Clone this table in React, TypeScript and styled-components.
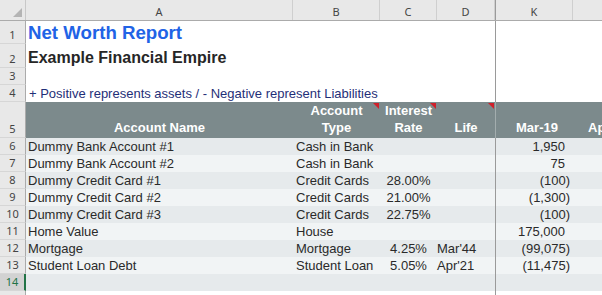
import styled, { createGlobalStyle, css } from "styled-components";

const GlobalStyle = createGlobalStyle`
  html, body {
    margin: 0;
    padding: 0;
    background: #fff;
    overflow: hidden;
  }
  #root {
    width: 602px;
    height: 295px;
    overflow: hidden;
  }
`;

const COLUMNS = "26px 267px 87px 57px 58px 78px 77px";

type Align = "left" | "center" | "right";

const accounts = [
  { name: "Dummy Bank Account #1", type: "Cash in Bank", rate: "", life: "", value: "1,950", neg: false },
  { name: "Dummy Bank Account #2", type: "Cash in Bank", rate: "", life: "", value: "75", neg: false },
  { name: "Dummy Credit Card #1", type: "Credit Cards", rate: "28.00%", life: "", value: "(100)", neg: true },
  { name: "Dummy Credit Card #2", type: "Credit Cards", rate: "21.00%", life: "", value: "(1,300)", neg: true },
  { name: "Dummy Credit Card #3", type: "Credit Cards", rate: "22.75%", life: "", value: "(100)", neg: true },
  { name: "Home Value", type: "House", rate: "", life: "", value: "175,000", neg: false },
  { name: "Mortgage", type: "Mortgage", rate: "4.25%", life: "Mar'44", value: "(99,075)", neg: true },
  { name: "Student Loan Debt", type: "Student Loan", rate: "5.05%", life: "Apr'21", value: "(11,475)", neg: true },
];

export default function App() {
  return (
    <>
      <GlobalStyle />
      <Sheet>
        <HeaderBar>
          <Corner>
            <CornerMark />
          </Corner>
          <ColHead>A</ColHead>
          <ColHead>B</ColHead>
          <ColHead>C</ColHead>
          <ColHead>D</ColHead>
          <ColHead $freeze>K</ColHead>
          <ColHead />
        </HeaderBar>

        <Row $h={23}>
          <RowHead>1</RowHead>
          <Cell>
            <Title>Net Worth Report</Title>
          </Cell>
          <Cell />
          <Cell />
          <Cell />
          <Cell $freeze="#9a9a9a" />
          <Cell />
        </Row>

        <Row $h={24}>
          <RowHead>2</RowHead>
          <Cell $pb={1}>
            <Subtitle>Example Financial Empire</Subtitle>
          </Cell>
          <Cell />
          <Cell />
          <Cell />
          <Cell $freeze="#9a9a9a" />
          <Cell />
        </Row>

        <Row $h={17}>
          <RowHead>3</RowHead>
          <Cell />
          <Cell />
          <Cell />
          <Cell />
          <Cell $freeze="#9a9a9a" />
          <Cell />
        </Row>

        <Row $h={17}>
          <RowHead>4</RowHead>
          <Cell $pl={3}>
            <Note>+ Positive represents assets / - Negative represent Liabilities</Note>
          </Cell>
          <Cell />
          <Cell />
          <Cell />
          <Cell $freeze="#9a9a9a" />
          <Cell />
        </Row>

        <Row $h={36} $bg="#7c8a8c">
          <RowHead>5</RowHead>
          <Cell $align="center" $pb={2}>
            <HeadText>Account Name</HeadText>
          </Cell>
          <Cell $align="center" $pb={2}>
            <HeadText>
              Account
              <br />
              Type
            </HeadText>
            <CommentMark />
          </Cell>
          <Cell $align="center" $pb={2}>
            <HeadText>
              Interest
              <br />
              Rate
            </HeadText>
            <CommentMark />
          </Cell>
          <Cell $align="center" $pb={2}>
            <HeadText>Life</HeadText>
            <CommentMark />
          </Cell>
          <Cell $align="center" $pl={7} $pb={2} $freeze="#a3adae">
            <HeadText>Mar-19</HeadText>
          </Cell>
          <Cell $align="left" $pl={15} $pb={2}>
            <HeadText>Apr-19</HeadText>
          </Cell>
        </Row>

        {accounts.map((a, i) => (
          <Row key={a.name} $h={17} $bg={i % 2 === 0 ? "#e6eaec" : "#f1f4f5"}>
            <RowHead>{i + 6}</RowHead>
            <Cell>
              <Data>{a.name}</Data>
            </Cell>
            <Cell $pl={3}>
              <Data>{a.type}</Data>
            </Cell>
            <Cell $align="center">
              <Data>{a.rate}</Data>
            </Cell>
            <Cell $pl={0}>
              <Data>{a.life}</Data>
            </Cell>
            <Cell $align="right" $pr={a.neg ? 3 : 8} $freeze="#9a9a9a">
              <Data>{a.value}</Data>
            </Cell>
            <Cell />
          </Row>
        ))}

        <Row $h={17} $bg="#e6eaec">
          <RowHead $selected>14</RowHead>
          <Cell />
          <Cell />
          <Cell />
          <Cell />
          <Cell $freeze="#9a9a9a" />
          <Cell />
        </Row>

        <Row $h={17}>
          <RowHead />
          <Cell />
          <Cell />
          <Cell />
          <Cell />
          <Cell $freeze="#9a9a9a" />
          <Cell />
        </Row>
      </Sheet>
    </>
  );
}

const Sheet = styled.div`
  width: 650px;
  font-family: "Liberation Sans", Arial, sans-serif;
`;

const HeaderBar = styled.div`
  display: grid;
  grid-template-columns: ${COLUMNS};
  height: 20px;
  background: #e8e8e8;
  border-bottom: 1px solid #ababab;
`;

const Corner = styled.div`
  display: flex;
  align-items: flex-end;
  justify-content: flex-end;
  padding: 0 3px 3px 0;
  border-right: 1px solid #c8c8c8;
`;

const CornerMark = styled.div`
  width: 0;
  height: 0;
  border-left: 9px solid transparent;
  border-bottom: 9px solid #b4b4b4;
`;

const ColHead = styled.div<{ $freeze?: boolean }>`
  display: flex;
  align-items: center;
  justify-content: center;
  padding-top: 2px;
  border-right: 1px solid #cfcfcf;
  font: 11px "Noto Sans", "DejaVu Sans", sans-serif;
  color: #444;
  ${(p) =>
    p.$freeze &&
    css`
      border-left: 1px solid #9a9a9a;
    `}
`;

const Row = styled.div<{ $h: number; $bg?: string }>`
  display: grid;
  grid-template-columns: ${COLUMNS};
  height: ${(p) => p.$h}px;
  background: ${(p) => p.$bg ?? "#fff"};
`;

const RowHead = styled.div<{ $selected?: boolean }>`
  display: flex;
  align-items: flex-end;
  justify-content: center;
  padding-bottom: 1px;
  line-height: 15px;
  background: ${(p) => (p.$selected ? "#d2d2d2" : "#e8e8e8")};
  border-right: ${(p) => (p.$selected ? "2px solid #217346" : "1px solid #ababab")};
  border-bottom: 1px solid #d6d6d6;
  font: 11px "Noto Sans", "DejaVu Sans", sans-serif;
  color: ${(p) => (p.$selected ? "#217346" : "#444")};
`;

const Cell = styled.div<{
  $align?: Align;
  $pl?: number;
  $pr?: number;
  $pb?: number;
  $freeze?: string;
}>`
  position: relative;
  display: flex;
  align-items: flex-end;
  justify-content: ${(p) =>
    p.$align === "center" ? "center" : p.$align === "right" ? "flex-end" : "flex-start"};
  text-align: ${(p) => p.$align ?? "left"};
  padding: 0 ${(p) => p.$pr ?? 2}px ${(p) => p.$pb ?? 0}px ${(p) => p.$pl ?? 2}px;
  min-width: 0;
  white-space: nowrap;
  ${(p) =>
    p.$freeze &&
    css`
      border-left: 1px solid ${p.$freeze};
    `}
`;

const CommentMark = styled.span`
  position: absolute;
  top: 1px;
  right: 1px;
  width: 0;
  height: 0;
  border-top: 6px solid #d0202a;
  border-left: 6px solid transparent;
`;

const Title = styled.span`
  font-size: 18.67px;
  font-weight: bold;
  line-height: 22px;
  color: #2163e6;
`;

const Subtitle = styled.span`
  font-size: 16px;
  font-weight: bold;
  line-height: 19px;
  color: #262626;
`;

const Note = styled.span`
  font-size: 13px;
  line-height: 16px;
  color: #1f2f78;
`;

const HeadText = styled.span`
  font-size: 13px;
  font-weight: bold;
  line-height: 17px;
  color: #fff;
`;

const Data = styled.span`
  font-size: 13px;
  line-height: 16px;
  color: #2a2a2a;
`;
